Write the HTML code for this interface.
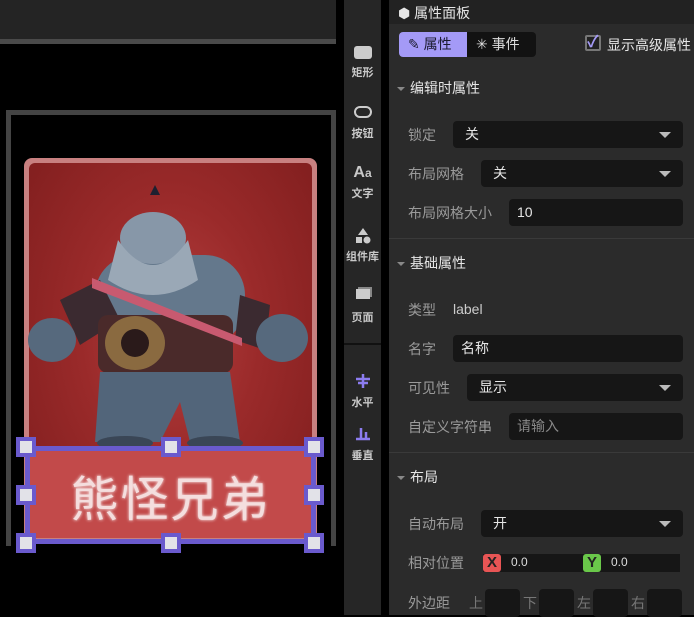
<!DOCTYPE html>
<html><head><meta charset="utf-8"><style>
*{margin:0;padding:0;box-sizing:border-box}
body{width:694px;height:615px;overflow:hidden;background:#000;font-family:"Liberation Sans","Noto Sans CJK SC",sans-serif;position:relative}
.a{position:absolute}
.lbl{position:absolute;color:#9a9a9a;font-size:14px;line-height:16px}
.inp{position:absolute;background:#161616;border-radius:4px;color:#e6e6e6;font-size:14px;line-height:27px;padding-left:12px;height:27px}
.arr{position:absolute;right:12px;top:11px;width:0;height:0;border-left:6px solid transparent;border-right:6px solid transparent;border-top:6px solid #bbb}
.sec{position:absolute;left:397px;color:#e6e6e6;font-size:14px}
.sec:before{content:"";display:inline-block;border-left:4px solid transparent;border-right:4px solid transparent;border-top:4px solid #888;margin-right:5px;vertical-align:middle}
.tb{position:absolute;left:344px;width:37px;text-align:center;color:#c8c8c8;font-size:11px;font-weight:bold}
.h{position:absolute;width:20px;height:20px;background:#e2e2e8;border:4px solid #6a5acd}
</style></head><body>
<div class="a" style="left:0;top:0;width:336px;height:39px;background:#242424"></div>
<div class="a" style="left:0;top:39px;width:336px;height:5px;background:#4a4a4a"></div>
<div class="a" style="left:6px;top:110px;width:330px;height:436px;border:5px solid #444;border-bottom:none"></div>
<div class="a" style="left:24px;top:158px;width:293px;height:384px;border-radius:8px;background:#c88080;padding:5px">
<div style="width:100%;height:100%;border-radius:6px;background:radial-gradient(ellipse at 50% 45%,#b43e3e 0%,#9a2a2a 45%,#7e1d1d 100%)"></div></div>
<div class="a" style="left:29px;top:450px;width:283px;height:88px;background:#c24a4a"></div>
<svg class="a" style="left:0;top:0" width="340" height="615">
<g>
<path d="M150 195 l5 -10 l5 10 z" fill="#1e2030"/>
<rect x="95" y="255" width="150" height="90" rx="40" fill="#64788c"/>
<ellipse cx="153" cy="238" rx="33" ry="26" fill="#8797a8"/>
<path d="M118 240 q35 50 70 0 l10 40 q-45 30 -90 0z" fill="#9aa8b6"/>
<path d="M60 300 l40 -20 l20 40 l-40 25z" fill="#3b2a30"/>
<path d="M240 295 l30 10 l-5 45 l-30 -10z" fill="#3b2a30"/>
<ellipse cx="52" cy="340" rx="24" ry="22" fill="#56697d"/>
<ellipse cx="282" cy="338" rx="26" ry="24" fill="#56697d"/>
<rect x="98" y="315" width="135" height="58" rx="10" fill="#4a2a2a"/>
<ellipse cx="135" cy="343" rx="30" ry="27" fill="#8a6a40"/>
<circle cx="135" cy="343" r="14" fill="#2a1a1a"/>
<path d="M92 278 l150 60 l0 8 l-150 -58z" fill="#c85a70"/>
<path d="M100 372 h130 l10 70 h-50 l-10 -40 l-20 40 h-65z" fill="#52657a"/>
<ellipse cx="125" cy="443" rx="28" ry="7" fill="#3a4656"/>
<ellipse cx="215" cy="443" rx="28" ry="7" fill="#3a4656"/>
</g>
</svg>
<div class="a" style="left:28px;top:450px;width:285px;height:90px;display:flex;align-items:center;justify-content:center;color:#f4dede;font-size:48px;letter-spacing:2px;font-family:'Noto Sans CJK SC',sans-serif;text-shadow:0 0 3px #fff">熊怪兄弟</div>
<div class="a" style="left:25px;top:446px;width:291px;height:98px;border:5px solid #6a5acd"></div>
<div class="h" style="left:16px;top:437px"></div><div class="h" style="left:161px;top:437px"></div><div class="h" style="left:304px;top:437px"></div>
<div class="h" style="left:16px;top:485px"></div><div class="h" style="left:304px;top:485px"></div>
<div class="h" style="left:16px;top:533px"></div><div class="h" style="left:161px;top:533px"></div><div class="h" style="left:304px;top:533px"></div>
<div class="a" style="left:344px;top:0;width:37px;height:615px;background:#262626"></div>
<div class="a" style="left:344px;top:343px;width:37px;height:2px;background:#111"></div>
<div class="a" style="left:354px;top:46px;width:18px;height:13px;background:#ccc;border-radius:3px"></div>
<div class="tb" style="top:64px">矩形</div>
<div class="a" style="left:354px;top:106px;width:18px;height:12px;border:2px solid #ccc;border-radius:6px"></div>
<div class="tb" style="top:125px">按钮</div>
<div class="tb" style="top:164px;font-size:16px">A<span style="font-size:12px">a</span></div>
<div class="tb" style="top:185px">文字</div>
<svg class="a" style="left:354px;top:226px" width="18" height="20"><path d="M9 2 L14 9 H4z" fill="#ccc"/><rect x="2" y="11" width="6" height="6" fill="#ccc"/><circle cx="13" cy="14" r="3.5" fill="#ccc"/></svg>
<div class="tb" style="top:248px">组件库</div>
<div class="a" style="left:356px;top:289px;width:14px;height:10px;background:#ccc;box-shadow:2px -2px 0 #888"></div>
<div class="tb" style="top:309px">页面</div>
<svg class="a" style="left:354px;top:373px" width="18" height="16"><path d="M9 1V15M2 6H16M4 10H14" stroke="#8c7cf0" stroke-width="2.5"/></svg>
<div class="tb" style="top:394px">水平</div>
<svg class="a" style="left:354px;top:425px" width="18" height="16"><path d="M2 14H16M7 3V13M12 7V13" stroke="#8c7cf0" stroke-width="2.5"/></svg>
<div class="tb" style="top:447px">垂直</div>
<div class="a" style="left:389px;top:0;width:305px;height:615px;background:#2b2b2b"></div>
<div class="a" style="left:389px;top:0;width:305px;height:24px;background:#222"></div>
<div class="a" style="left:398px;top:3px;color:#e6e6e6;font-size:14px">⬢ 属性面板</div>
<div class="a" style="left:399px;top:32px;width:137px;height:25px;background:#121212;border-radius:4px"></div>
<div class="a" style="left:399px;top:32px;width:68px;height:25px;background:#a49af7;border-radius:4px 0 0 4px;color:#1a1a2e;font-size:14px;line-height:25px;padding-left:9px">✎ 属性</div>
<div class="a" style="left:476px;top:32px;color:#ddd;font-size:14px;line-height:25px">✳ 事件</div>
<div class="a" style="left:585px;top:35px;width:16px;height:16px;border:2px solid #777;border-radius:2px;background:#222;color:#a49af7;font-size:16px;line-height:12px;font-weight:bold">✓</div>
<div class="a" style="left:607px;top:35px;color:#e6e6e6;font-size:14px">显示高级属性</div>
<div class="sec" style="top:78px">编辑时属性</div>
<div class="lbl" style="left:408px;top:127px">锁定</div>
<div class="inp" style="left:453px;top:121px;width:230px">关<div class="arr"></div></div>
<div class="lbl" style="left:408px;top:166px">布局网格</div>
<div class="inp" style="left:481px;top:160px;width:202px">关<div class="arr"></div></div>
<div class="lbl" style="left:408px;top:205px">布局网格大小</div>
<div class="inp" style="left:509px;top:199px;width:174px;padding-left:8px">10</div>
<div class="a" style="left:389px;top:238px;width:305px;height:1px;background:#3a3a3a"></div>
<div class="sec" style="top:253px">基础属性</div>
<div class="lbl" style="left:408px;top:302px">类型</div>
<div class="a" style="left:453px;top:301px;color:#ccc;font-size:14px">label</div>
<div class="lbl" style="left:408px;top:341px">名字</div>
<div class="inp" style="left:453px;top:335px;width:230px;padding-left:8px">名称</div>
<div class="lbl" style="left:408px;top:380px">可见性</div>
<div class="inp" style="left:467px;top:374px;width:216px">显示<div class="arr"></div></div>
<div class="lbl" style="left:408px;top:419px">自定义字符串</div>
<div class="inp" style="left:509px;top:413px;width:174px;padding-left:8px;color:#888">请输入</div>
<div class="a" style="left:389px;top:452px;width:305px;height:1px;background:#3a3a3a"></div>
<div class="sec" style="top:467px">布局</div>
<div class="lbl" style="left:408px;top:516px">自动布局</div>
<div class="inp" style="left:481px;top:510px;width:202px">开<div class="arr"></div></div>
<div class="lbl" style="left:408px;top:555px">相对位置</div>
<div class="a" style="left:483px;top:554px;width:197px;height:18px;background:#161616"></div>
<div class="a" style="left:483px;top:554px;width:18px;height:18px;background:#e85555;border-radius:3px;color:#222;font-weight:bold;font-size:15px;text-align:center;line-height:18px">X</div>
<div class="a" style="left:511px;top:555px;color:#ddd;font-size:12px">0.0</div>
<div class="a" style="left:583px;top:554px;width:18px;height:18px;background:#6ac84a;border-radius:3px;color:#222;font-weight:bold;font-size:15px;text-align:center;line-height:18px">Y</div>
<div class="a" style="left:611px;top:555px;color:#ddd;font-size:12px">0.0</div>
<div class="lbl" style="left:408px;top:595px">外边距</div>
<div class="lbl" style="left:469px;top:595px;color:#777">上</div><div class="a" style="left:485px;top:589px;width:35px;height:28px;background:#161616;border-radius:4px"></div>
<div class="lbl" style="left:523px;top:595px;color:#777">下</div><div class="a" style="left:539px;top:589px;width:35px;height:28px;background:#161616;border-radius:4px"></div>
<div class="lbl" style="left:577px;top:595px;color:#777">左</div><div class="a" style="left:593px;top:589px;width:35px;height:28px;background:#161616;border-radius:4px"></div>
<div class="lbl" style="left:631px;top:595px;color:#777">右</div><div class="a" style="left:647px;top:589px;width:35px;height:28px;background:#161616;border-radius:4px"></div>
</body></html>
